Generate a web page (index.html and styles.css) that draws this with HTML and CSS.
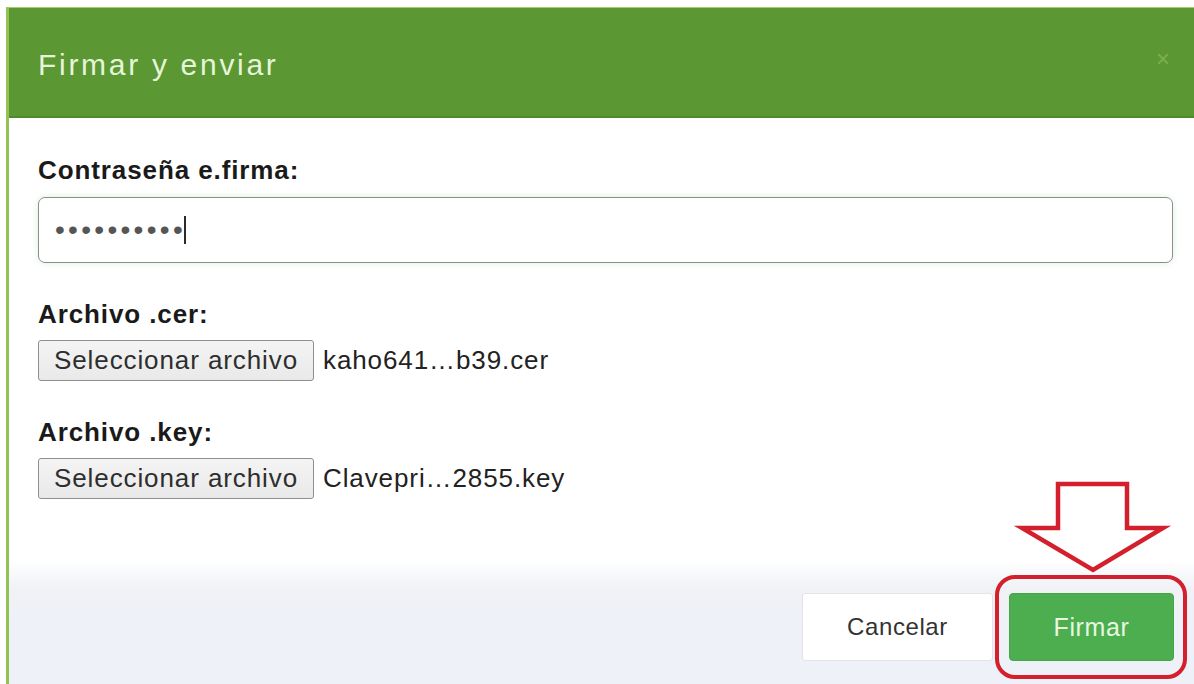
FILE: index.html
```html
<!DOCTYPE html>
<html lang="es">
<head>
<meta charset="utf-8">
<title>Firmar y enviar</title>
<link rel="stylesheet" href="styles.css">
</head>
<body>
<div class="modal">
  <header class="modal-header">
    <h1 class="modal-title">Firmar y enviar</h1>
    <span class="modal-close">×</span>
  </header>
  <section class="modal-body">
    <label class="field-label">Contraseña e.firma:</label>
    <div class="text-field">
      <span class="secret">••••••••••</span><span class="caret"></span>
    </div>

    <label class="field-label spaced">Archivo .cer:</label>
    <div class="file-row">
      <button class="file-btn" type="button">Seleccionar archivo</button>
      <span class="file-name">kaho641…b39.cer</span>
    </div>

    <label class="field-label spaced">Archivo .key:</label>
    <div class="file-row">
      <button class="file-btn" type="button">Seleccionar archivo</button>
      <span class="file-name">Clavepri…2855.key</span>
    </div>
  </section>
  <footer class="modal-footer">
    <button class="btn btn-cancel" type="button">Cancelar</button>
    <div class="primary-wrap">
      <button class="btn btn-primary" type="button">Firmar</button>
      <span class="highlight"></span>
      <svg class="pointer" viewBox="1009 478 170 100" width="170" height="100">
        <polygon points="1058,484 1127,484 1127,528 1163,528 1093,570 1022,528 1058,528"
                 fill="none" stroke="#d3202c" stroke-width="4.5" stroke-linejoin="miter"/>
      </svg>
    </div>
  </footer>
</div>
</body>
</html>
```

FILE: styles.css
```css
html, body {
  margin: 0;
  padding: 0;
  background: #ffffff;
  height: 100%;
  overflow: hidden;
}

body {
  font-family: "Liberation Sans", Arial, sans-serif;
  color: #1d1d1d;
}

.modal {
  margin: 7px 0 0 6px;
  height: calc(100vh - 7px);
  box-sizing: border-box;
  border-left: 3px solid #93c153;
  border-top: 1px solid #a8cd6c;
  display: flex;
  flex-direction: column;
  background: #ffffff;
}

/* green title bar */
.modal-header {
  height: 110px;
  box-sizing: border-box;
  background: #5b9733;
  border-bottom: 2px solid #4f8a2c;
  display: flex;
  align-items: center;
  justify-content: space-between;
  padding: 6px 24px 0 29px;
}

.modal-title {
  margin: 0;
  font-weight: normal;
  font-size: 30px;
  letter-spacing: 2.7px;
  color: #e6f5da;
}

.modal-close {
  font-size: 24px;
  color: #7cb04c;
  line-height: 1;
  margin-top: -12px;
}

/* form area */
.modal-body {
  flex: 1;
  padding: 38px 21px 0 29px;
  display: flex;
  flex-direction: column;
  align-items: stretch;
}

.field-label {
  display: block;
  font-weight: bold;
  font-size: 26px;
  letter-spacing: 0.9px;
  line-height: 28px;
  color: #1a1a1a;
  margin-bottom: 13px;
}

.field-label.spaced {
  margin-top: 37px;
  margin-bottom: 12px;
}

.text-field {
  height: 66px;
  box-sizing: border-box;
  border: 1px solid #8d8d8d;
  border-radius: 7px;
  box-shadow: 0 0 6px rgba(120, 190, 120, 0.25);
  display: flex;
  align-items: center;
  padding-left: 16px;
  background: #ffffff;
}

.secret {
  font-size: 28px;
  letter-spacing: 3.3px;
  color: #555555;
  line-height: 1;
}

.caret {
  width: 2px;
  height: 28px;
  background: #2b2b2b;
  margin-left: -2px;
}

.file-row {
  display: flex;
  align-items: center;
  gap: 9px;
}

.file-btn {
  height: 41px;
  width: 276px;
  box-sizing: border-box;
  border: 1px solid #8f8f8f;
  border-radius: 3px;
  background: linear-gradient(#f4f4f4, #e9e9e9);
  font-family: "Liberation Sans", Arial, sans-serif;
  font-size: 26px;
  letter-spacing: 0.9px;
  color: #2e2e2e;
  padding: 0;
}

.file-name {
  font-size: 26px;
  letter-spacing: 0.9px;
  color: #222222;
}

/* action bar */
.modal-footer {
  height: 124px;
  box-sizing: border-box;
  background: linear-gradient(#ffffff 0px, #f1f2f6 28px, #eef1f8 60px);
  display: flex;
  justify-content: flex-end;
  align-items: flex-start;
  gap: 16px;
  padding: 33px 20px 0 0;
}

.btn {
  height: 68px;
  box-sizing: border-box;
  border-radius: 3px;
  font-family: "Liberation Sans", Arial, sans-serif;
  padding: 0;
}

.btn-cancel {
  width: 191px;
  background: #ffffff;
  border: 1px solid #e3e3e3;
  color: #333333;
  font-size: 24px;
  letter-spacing: 0.6px;
}

.primary-wrap {
  position: relative;
}

.btn-primary {
  width: 165px;
  background: #4cae4f;
  border: 1px solid #46a449;
  border-radius: 4px;
  color: #e9f7e2;
  font-size: 25px;
  letter-spacing: 0.6px;
}

.highlight {
  position: absolute;
  top: -18px;
  left: -14px;
  right: -13px;
  bottom: -18px;
  border: 4px solid #d3202c;
  border-radius: 20px;
  pointer-events: none;
}

.pointer {
  position: absolute;
  left: 0;
  top: -115px;
  pointer-events: none;
}
```
